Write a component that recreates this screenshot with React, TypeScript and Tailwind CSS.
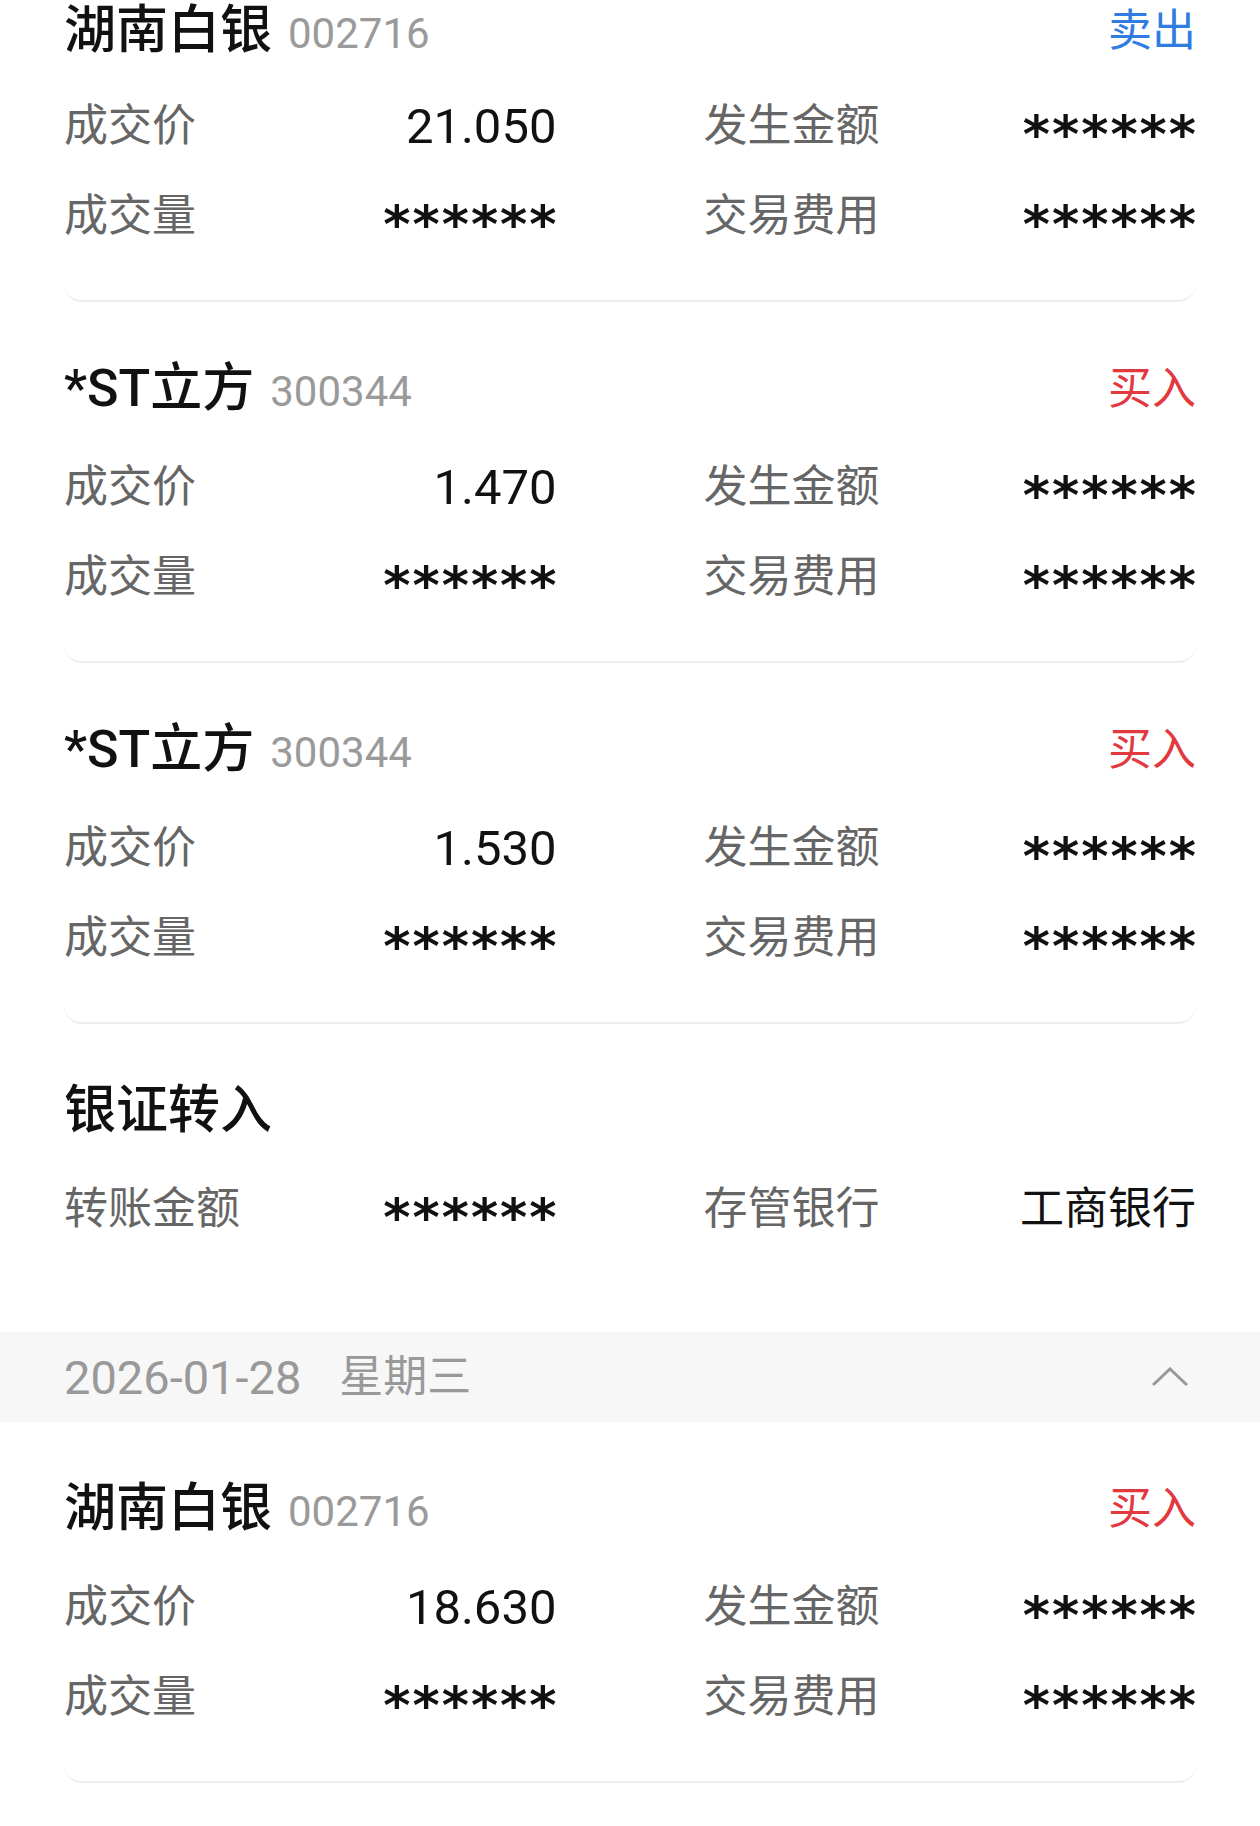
import React from "react";

type Trade = {
  name: string;
  code: string;
  side: "buy" | "sell";
  price: string;
};

const earlier: Trade[] = [
  { name: "湖南白银", code: "002716", side: "sell", price: "21.050" },
  { name: "*ST立方", code: "300344", side: "buy", price: "1.470" },
  { name: "*ST立方", code: "300344", side: "buy", price: "1.530" },
];

const later: Trade[] = [{ name: "湖南白银", code: "002716", side: "buy", price: "18.630" }];

const Stars: React.FC = () => (
  <span className="translate-y-[8px] -mr-[2px] font-['DejaVu_Sans',sans-serif] text-[52px] font-bold leading-none tracking-[2px] text-[#111]">
    ******
  </span>
);

const Cell: React.FC<{ label: string; value?: string }> = ({ label, value }) => (
  <div className="flex h-[90px] items-center justify-between">
    <span className="text-[44px] leading-none text-[#666]">{label}</span>
    {value ? (
      <span className="text-[49px] leading-none text-[#111]">{value}</span>
    ) : (
      <Stars />
    )}
  </div>
);

const TradeCard: React.FC<{ trade: Trade; first?: boolean }> = ({ trade, first }) => (
  <div
    className={
      first
        ? "mx-[64px] rounded-b-[18px] border-b-2 border-[#eeeeee] pt-[60px] pb-[39px]"
        : "mx-[64px] rounded-b-[18px] border-b-2 border-[#eeeeee] pt-[57px] pb-[39px]"
    }
  >
    <div className={first ? "flex h-[60px] items-center justify-between" : "flex h-[60px] items-center justify-between"}>
      <div className="flex items-baseline">
        <span className="text-[52px] font-medium leading-none text-[#111]">{trade.name}</span>
        <span className="ml-[16px] text-[42px] leading-none text-[#9a9a9a]">{trade.code}</span>
      </div>
      {trade.side === "buy" ? (
        <span className="text-[44px] leading-none text-[#e2393f]">买入</span>
      ) : (
        <span className="text-[44px] leading-none text-[#2f7de1]">卖出</span>
      )}
    </div>
    <div className={first ? "mt-[20px] grid grid-cols-2 gap-x-[147px]" : "mt-[23px] grid grid-cols-2 gap-x-[147px]"}>
      <Cell label="成交价" value={trade.price} />
      <Cell label="发生金额" />
      <Cell label="成交量" />
      <Cell label="交易费用" />
    </div>
  </div>
);

export default function App() {
  return (
    <div className="h-[1826px] overflow-hidden bg-white font-['Roboto','Noto_Sans_CJK_SC',sans-serif]">
      <div className="-mt-[59px]">
        {earlier.map((t, i) => (
          <TradeCard key={i} trade={t} first={i === 0} />
        ))}

        <div className="mx-[64px] pt-[57px] pb-[78px]">
          <div className="flex h-[60px] items-center">
            <span className="text-[52px] font-medium leading-none text-[#111]">银证转入</span>
          </div>
          <div className="mt-[23px] grid grid-cols-2 gap-x-[147px]">
            <Cell label="转账金额" />
            <div className="flex h-[90px] items-center justify-between">
              <span className="text-[44px] leading-none text-[#666]">存管银行</span>
              <span className="text-[44px] leading-none text-[#111]">工商银行</span>
            </div>
          </div>
        </div>

        <div className="flex h-[90px] items-center justify-between bg-[#f7f7f7] pl-[64px] pr-[72px]">
          <div className="flex items-center leading-none text-[#999]">
            <span className="text-[47px]">2026-01-28</span>
            <span className="ml-[38px] text-[44px]">星期三</span>
          </div>
          <svg width="36" height="20" viewBox="0 0 36 20" fill="none">
            <path d="M1 18 L18 2 L35 18" stroke="#999" strokeWidth="3" />
          </svg>
        </div>

        {later.map((t, i) => (
          <TradeCard key={i} trade={t} />
        ))}
      </div>
    </div>
  );
}
